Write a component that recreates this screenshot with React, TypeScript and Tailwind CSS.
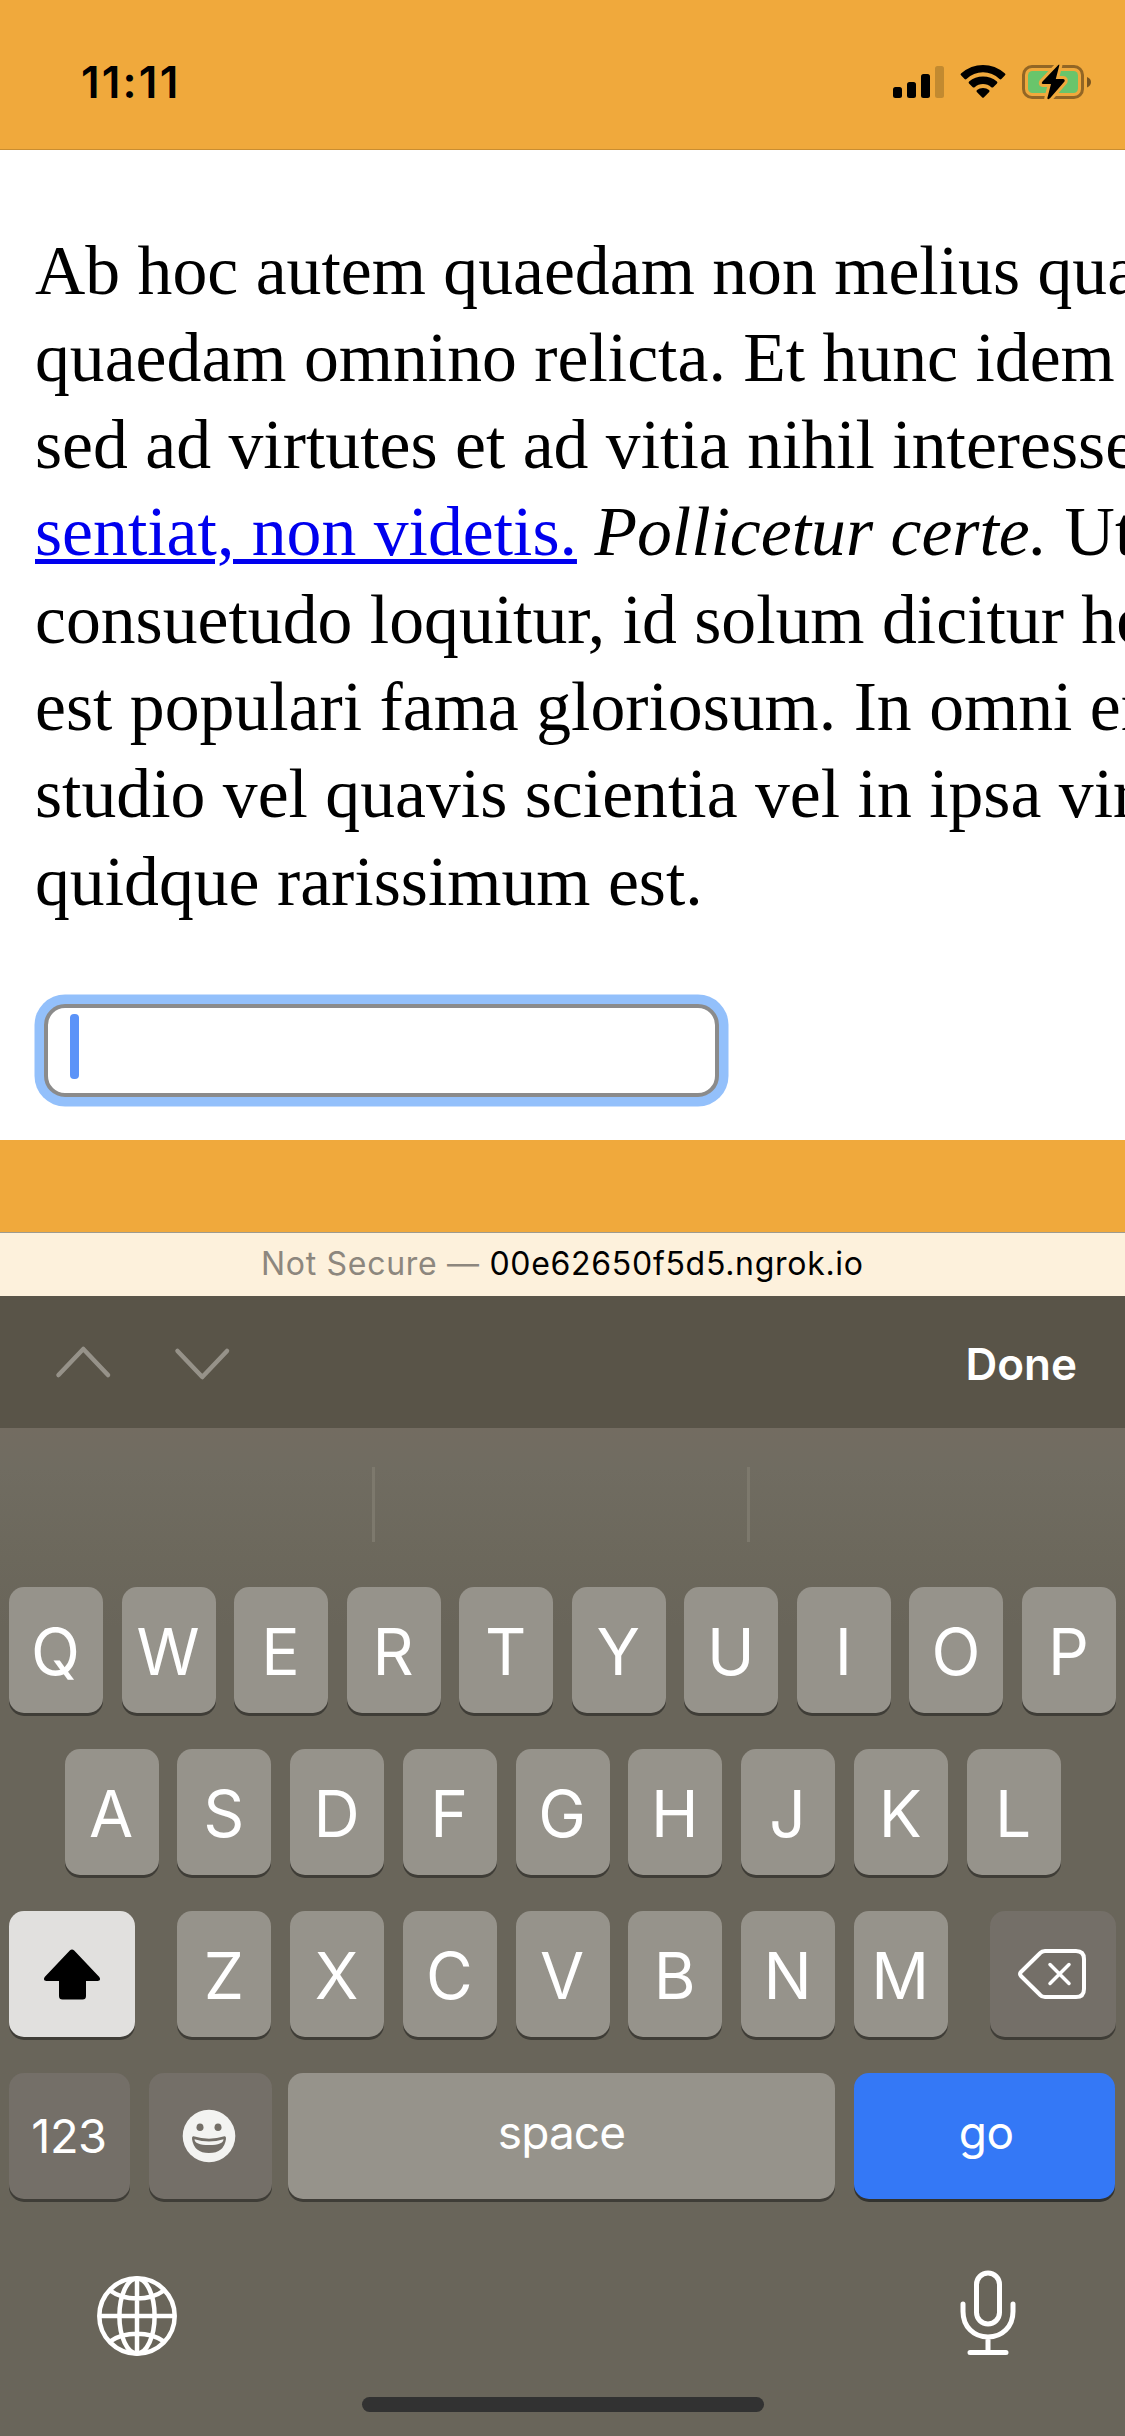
import React from "react";

const letterKey =
  "flex h-[126px] w-[94px] items-center justify-center rounded-[15px] bg-[#96938b] pt-[3px] pr-[1px] text-[64px] leading-none text-white shadow-[0_3px_0_#3f3d37]";

function LetterKeys({ letters }: { letters: string }) {
  return (
    <>
      {letters.split("").map((l) => (
        <div key={l} className={letterKey}>
          {l}
        </div>
      ))}
    </>
  );
}

function StatusIcons() {
  return (
    <svg width="200" height="36" viewBox="892 64 200 36" className="mt-[64px]">
      <rect x="893" y="87" width="9" height="11" rx="2.5" />
      <rect x="907" y="82" width="9" height="16" rx="2.5" />
      <rect x="921" y="74" width="9" height="24" rx="2.5" />
      <rect x="935" y="66" width="9" height="32" rx="2.5" fill="#c28a30" />
      <path d="M961 73.4Q971 65 983 65T1005 73.4Q1006 74.3 1005 75.3L1001.400 79Q1000.500 79.800 999.500 79Q992.500 72.300 983 72.300T966.500 79Q965.500 79.800 964.600 79L961 75.300Q960 74.300 961 73.400Z" />
      <path d="M969.100 81.500Q975 76.500 983 76.500T996.900 81.500Q997.900 82.400 997 83.400L993.200 87.200Q992.300 88 991.300 87.200Q987.800 84 983 84T974.700 87.200Q973.700 88 972.800 87.200L969 83.400Q968.100 82.400 969.100 81.500Z" />
      <path d="M977 90Q979.500 88 983 88T989 90Q990 91 989.200 92L984 97.300Q983 98.300 982 97.300L976.800 92Q976 91 977 90Z" />
      <rect x="1023.500" y="66.500" width="59" height="31" rx="8.500" fill="none" stroke="#926625" strokeWidth="3" />
      <rect x="1028" y="71" width="50" height="22" rx="4.500" fill="#69c56b" />
      <path d="M1087 77Q1091 78.500 1091 82T1087 87.500Z" fill="#7b561f" />
      <path
        d="M1058.300 65L1042.300 81.800Q1041 84 1043 84H1051L1047.300 98.200Q1048 100 1050 98.300L1064.500 81.500Q1065.300 79 1063 79H1055.800L1059.300 65.500Q1059.500 64 1058.300 65Z"
        stroke="#f0a93c"
        strokeWidth="6"
        strokeLinejoin="round"
        paintOrder="stroke"
      />
    </svg>
  );
}

function ShiftIcon() {
  return (
    <svg width="58" height="51" viewBox="0 0 58 51">
      <path d="M26.800 1.600Q29 -.6 31.200 1.600L56.300 28Q58.500 32 54.500 32H43V47Q43 50.500 39.500 50.500H19.500Q16 50.500 16 47V32H3.500Q-.5 32 1.700 28Z" />
    </svg>
  );
}

function BackspaceIcon() {
  return (
    <svg width="70" height="52" viewBox="0 0 70 52" fill="none" stroke="#fff" strokeWidth="4" strokeLinejoin="round" strokeLinecap="round">
      <path d="M28 3H59Q67 3 67 11V41Q67 49 59 49H28Q25 49 23 46.800L4.200 28.300Q2 26 4.200 23.700L23 5.200Q25 3 28 3Z" />
      <path d="M33 16.500L52 35.500M52 16.500L33 35.500" strokeWidth="3.500" />
    </svg>
  );
}

function EmojiIcon() {
  return (
    <svg width="54" height="54" viewBox="0 0 54 54">
      <circle cx="27" cy="27" r="26.300" fill="#f3f3f1" />
      <ellipse cx="18" cy="18.300" rx="3.500" ry="3.800" fill="#746f68" />
      <ellipse cx="36" cy="18.300" rx="3.500" ry="3.800" fill="#746f68" />
      <path d="M11.500 27.300Q27 32 42.500 27.300Q44.300 27 44 30Q42 44 27 44T10 30Q9.700 27 11.500 27.300Z" fill="#746f68" />
      <path d="M12.500 30.200Q27 34.800 41.500 30.200Q41.500 36 27 36T12.500 30.200Z" fill="#f3f3f1" />
    </svg>
  );
}

function GlobeIcon() {
  return (
    <svg width="82" height="82" viewBox="0 0 82 82" fill="none" stroke="#fff" strokeWidth="4.500">
      <circle cx="41" cy="41" r="37.700" />
      <ellipse cx="41" cy="41" rx="17.600" ry="37.500" />
      <path d="M41 3V79M3 41H79M14 15.500Q25 23.500 41 23.500T68 15.500M14 66.500Q25 58.800 41 58.800T68 66.500" />
    </svg>
  );
}

function MicIcon() {
  return (
    <svg width="58" height="86" viewBox="0 0 58 86" fill="none" stroke="#fff" strokeWidth="5" strokeLinecap="round">
      <rect x="17.500" y="3" width="23" height="51" rx="11.500" />
      <path d="M4 34V41.500C4 57 15 67 29 67S54 57 54 41.500V34M29 67V82M11 82.500H47" />
    </svg>
  );
}

export default function App() {
  return (
    <div className="flex h-[2436px] w-[1125px] flex-col overflow-hidden bg-white font-['Inter',sans-serif]">
      <header className="flex h-[150px] shrink-0 justify-between border-b border-[#c98d31] bg-[#f0a93c] pr-[33px] pl-[81px]">
        <div className="mt-[60px] text-[44px] leading-[44px] font-semibold tracking-[2.200px] text-black">11:11</div>
        <StatusIcons />
      </header>

      <main className="flex h-[990px] shrink-0 flex-col items-start overflow-hidden bg-white pl-[35px] text-black">
        <p className="mt-[76.500px] h-[699px] font-['Liberation_Serif',serif] text-[69.700px] leading-[87.300px] whitespace-nowrap">
          Ab hoc autem quaedam non melius quam
          <br />
          quaedam omnino relicta. Et hunc idem
          <br />
          sed ad virtutes et ad vitia nihil interesse.
          <br />
          <a className="text-[#0000ee] underline decoration-[4.500px] underline-offset-[4px]">sentiat, non videtis.</a>{" "}
          <i>Pollicetur certe.</i> Ut
          <br />
          consuetudo loquitur, id solum dicitur honestum
          <br />
          est populari fama gloriosum. In omni enim
          <br />
          studio vel quavis scientia vel in ipsa virtute
          <br />
          quidque rarissimum est.
        </p>
        <div className="mt-[78px] ml-[9px] flex h-[93px] w-[675px] items-start rounded-[21px] border-4 border-[#8b8b8b] bg-white pt-[6px] pl-[22px] shadow-[0_0_0_9.500px_#93c0fb]">
          <div className="h-[65px] w-[9px] rounded-[4px] bg-[#5b93f8]" />
        </div>
      </main>

      <div className="h-[92px] shrink-0 bg-[#f0a93c]" />
      <div className="flex h-[64px] shrink-0 items-center border-t border-[#9d9b90] bg-[#fdf1dc] pb-[1px] pl-[261px] text-[32px] tracking-[0.700px] whitespace-pre">
        <span className="text-[#8d877e]">Not Secure — </span>
        <span className="text-black">00e62650f5d5.ngrok.io</span>
      </div>

      <div className="flex h-[132px] shrink-0 items-center justify-between bg-[#595448] pr-[48px] pl-[54px]">
        <svg width="178" height="38" viewBox="0 0 178 38" fill="none" stroke="#969289" strokeWidth="4.500" strokeLinecap="round" strokeLinejoin="round">
          <path d="M4.500 32L29.300 6L54 32M123.500 8L148.300 34L173 8" />
        </svg>
        <div className="pt-[4px] text-[44px] leading-none font-semibold text-white">Done</div>
      </div>

      <div className="flex h-[1008px] shrink-0 flex-col bg-[linear-gradient(#736c61_0px,#706c61_40px,#6c685c_130px,#69655a_200px)]">
        <div className="flex h-[159px] shrink-0 pt-[39px]">
          <div className="h-[75px] w-[375px] border-r-[3px] border-[#7d796d]" />
          <div className="h-[75px] w-[375px] border-r-[3px] border-[#7d796d]" />
        </div>

        <div className="flex shrink-0 flex-col gap-[36px] px-[9px]">
          <div className="flex justify-between">
            <LetterKeys letters="QWERTYUIOP" />
          </div>
          <div className="flex justify-between px-[55.500px]">
            <LetterKeys letters="ASDFGHJKL" />
          </div>
          <div className="flex justify-between">
            <div className="flex h-[126px] w-[126px] items-center justify-center rounded-[15px] bg-[#e1e0de] shadow-[0_3px_0_#3f3d37]">
              <ShiftIcon />
            </div>
            <div className="flex w-[770.500px] justify-between">
              <LetterKeys letters="ZXCVBNM" />
            </div>
            <div className="flex h-[126px] w-[126px] items-center justify-center rounded-[15px] bg-[#746f68] pr-[2px] shadow-[0_3px_0_#3f3d37]">
              <BackspaceIcon />
            </div>
          </div>
          <div className="flex h-[126px] text-white">
            <div className="flex w-[121px] items-center justify-center rounded-[15px] bg-[#746f68] pr-[1px] pb-[2px] text-[47px] leading-none tracking-[-0.500px] shadow-[0_3px_0_#3f3d37]">
              123
            </div>
            <div className="ml-[18.500px] flex w-[123.500px] items-center justify-center rounded-[15px] bg-[#746f68] pr-[2px] shadow-[0_3px_0_#3f3d37]">
              <EmojiIcon />
            </div>
            <div className="ml-[16px] flex w-[547px] items-center justify-center rounded-[15px] bg-[#96938b] pb-[8px] text-[46px] leading-none tracking-[-0.900px] shadow-[0_3px_0_#3f3d37]">
              space
            </div>
            <div className="ml-[18.500px] flex w-[261.500px] items-center justify-center rounded-[15px] bg-[#3478f6] pb-[8px] pl-[4px] text-[46px] leading-none tracking-[-0.500px] shadow-[0_3px_0_#33332f]">
              go
            </div>
          </div>
        </div>

        <div className="mt-[69px] flex shrink-0 justify-between pr-[108px] pl-[96px]">
          <div className="pt-[7px]">
            <GlobeIcon />
          </div>
          <div className="pt-[2px]">
            <MicIcon />
          </div>
        </div>
        <div className="mx-auto mt-[40px] h-[15px] w-[402px] rounded-full bg-[#323232]" />
      </div>
    </div>
  );
}
